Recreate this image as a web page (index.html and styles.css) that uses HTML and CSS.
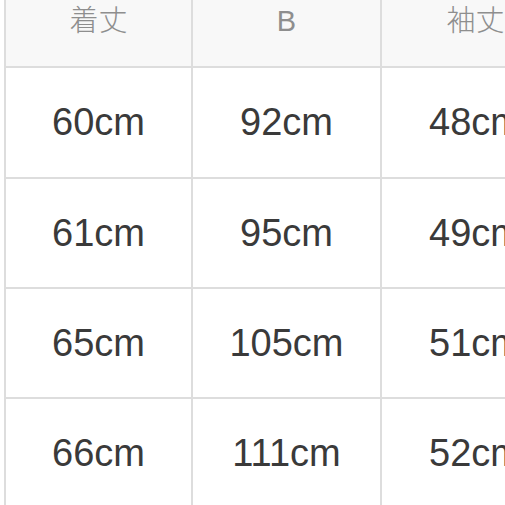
FILE: index.html
```html
<!DOCTYPE html>
<html lang="ja">
<head>
<meta charset="utf-8">
<link rel="stylesheet" href="styles.css">
</head>
<body>
<div class="table">
  <div class="cell head">着丈</div>
  <div class="cell head">B</div>
  <div class="cell head">袖丈</div>

  <div class="cell">60cm</div>
  <div class="cell">92cm</div>
  <div class="cell">48cm</div>

  <div class="cell">61cm</div>
  <div class="cell">95cm</div>
  <div class="cell">49cm</div>

  <div class="cell">65cm</div>
  <div class="cell">105cm</div>
  <div class="cell">51cm</div>

  <div class="cell">66cm</div>
  <div class="cell">111cm</div>
  <div class="cell">52cm</div>
</div>
</body>
</html>
```

FILE: styles.css
```css
html, body {
  margin: 0;
  padding: 0;
  overflow: hidden;
  background: #ffffff;
  width: 505px;
  height: 505px;
}

.table {
  margin-left: 4px;
  padding-left: 2px;
  display: grid;
  grid-template-columns: 185px 187px 187px;
  grid-template-rows: 66px 109px 108px 108px 108px;
  gap: 2px;
  background: #dddddd;
  width: max-content;
}

.cell {
  background: #ffffff;
  display: flex;
  align-items: center;
  justify-content: center;
  font-family: "Liberation Sans", Arial, sans-serif;
  font-size: 38px;
  color: #3a3a3a;
}

.cell.head {
  background: #f8f8f8;
  align-items: flex-start;
  font-family: "Liberation Sans", "Noto Sans CJK JP", sans-serif;
  font-weight: 300;
  font-size: 29px;
  line-height: 42px;
  color: #8e8e8e;
}
```
